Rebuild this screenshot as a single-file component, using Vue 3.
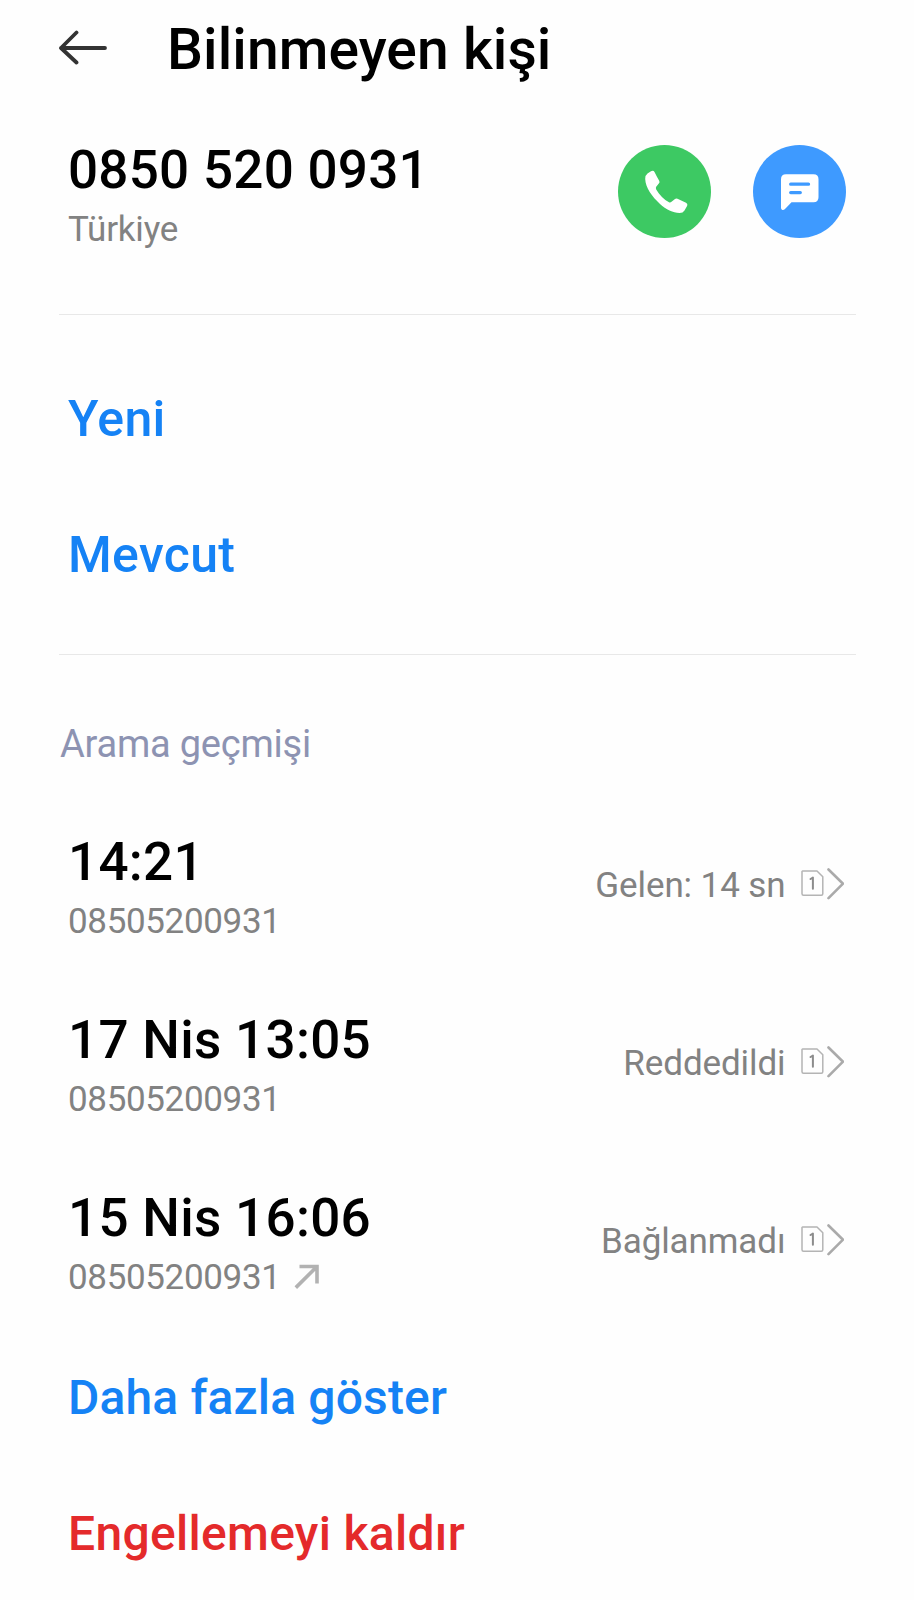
<script setup>
const calls = [
  { time: '14:21', number: '08505200931', status: 'Gelen: 14 sn', outgoing: false },
  { time: '17 Nis 13:05', number: '08505200931', status: 'Reddedildi', outgoing: false },
  { time: '15 Nis 16:06', number: '08505200931', status: 'Bağlanmadı', outgoing: true },
]
</script>

<template>
  <main class="page">
    <header class="header">
      <svg class="back" width="50" height="36" viewBox="0 0 50 36">
        <path d="M18.500 2.500 3 18l15.500 14.500M3 18h44" />
      </svg>
      <h1 class="title">Bilinmeyen kişi</h1>
    </header>

    <section class="contact">
      <div class="lines">
        <div class="primary phone">0850 520 0931</div>
        <div class="secondary region">Türkiye</div>
      </div>
      <div class="actions">
        <button class="round call">
          <svg width="93" height="93" viewBox="0 0 93 93">
            <path d="M29.500 28.500 33 26.200Q35.500 25 36.500 27L38.800 31.500 41.200 35.700Q42 37.200 41 38.300L38.200 41.800Q37.500 43 38.200 44.500C41.500 50 46 54.500 51 57.300Q52.500 57.800 53.500 56.800L57 54Q58 53.200 59.500 53.800L68 57.800Q70 59 69.200 60.800L66.500 65.500Q65 68 61.500 68C55 68 48 64.500 42 59C34 51.500 27.500 42.500 27.200 34Q27 30.300 29.500 28.500Z" />
          </svg>
        </button>
        <button class="round message">
          <svg width="93" height="93" viewBox="0 0 93 93">
            <path d="M33 29.200H60.500Q65.500 29.200 65.500 34.200V52.300Q65.500 57.300 60.500 57.300H38.500L32 64Q30.500 65.500 29 64.800Q28 64.300 28 62.800V34.200Q28 29.200 33 29.200Z" />
            <path class="bar" d="M37.700 39.200H55.500M37.700 47.600H47.300" />
          </svg>
        </button>
      </div>
    </section>

    <nav class="links">
      <a class="link">Yeni</a>
      <a class="link">Mevcut</a>
    </nav>

    <h2 class="caption">Arama geçmişi</h2>

    <ul class="history">
      <li v-for="call in calls" :key="call.time" class="row">
        <div class="lines">
          <div class="primary">{{ call.time }}</div>
          <div class="secondary number">
            <span>{{ call.number }}</span>
            <svg v-if="call.outgoing" class="out" width="28" height="28" viewBox="0 0 28 28">
              <path d="M6.500 4.500H24V21.500M23 5.500 2.800 25.600" />
            </svg>
          </div>
        </div>
        <div class="status">
          <span class="state">{{ call.status }}</span>
          <svg width="44" height="34" viewBox="0 0 44 34">
            <path class="sim" d="M2.500 4H17L22.800 9.800V26.800Q22.800 28.300 21.300 28.300H3.500Q2 28.300 2 26.800V4.500Z" />
            <path class="one" d="M10.500 12 12.900 10.600V21.800" />
            <path class="chevron" d="M28.500 2.500 43 16.700 28.500 31.200" />
          </svg>
        </div>
      </li>
    </ul>

    <footer class="footer">
      <a class="link more">Daha fazla göster</a>
      <a class="link danger">Engellemeyi kaldır</a>
    </footer>
  </main>
</template>

<style>
body {
  background: #fefefe;
}
</style>

<style scoped>
.page {
  width: 914px;
  height: 1600px;
  overflow: hidden;
  background: #fefefe;
  color: #000;
  font-family: Roboto, "Liberation Sans", sans-serif;
  display: flex;
  flex-direction: column;
  white-space: nowrap;
}
svg {
  display: block;
  flex: none;
  fill: none;
  stroke-linecap: round;
  stroke-linejoin: round;
}
.header {
  height: 100px;
  flex: none;
  display: flex;
  align-items: center;
  padding-left: 58px;
}
.back {
  margin-bottom: 4px;
  stroke: #333;
  stroke-width: 3.800px;
}
.title {
  margin: 0 0 0 59px;
  font-size: 57px;
  font-weight: 500;
  line-height: 68px;
  letter-spacing: 0.080px;
}
.contact {
  height: 215px;
  box-sizing: border-box;
  flex: none;
  margin: 0 58px 0 59px;
  padding: 39px 10px 0 9px;
  border-bottom: 1px solid #e8e8e8;
  display: flex;
  justify-content: space-between;
}
.primary {
  font-size: 53px;
  font-weight: 500;
  line-height: 62px;
  letter-spacing: 0.300px;
}
.phone {
  letter-spacing: 0.250px;
}
.secondary {
  margin-top: 6px;
  display: flex;
  align-items: center;
  font-size: 35px;
  line-height: 45px;
  letter-spacing: -0.200px;
  color: #828282;
}
.number {
  letter-spacing: -0.350px;
}
.actions {
  display: flex;
  gap: 42px;
  padding-top: 5.500px;
}
.round {
  width: 93px;
  height: 93px;
  padding: 0;
  border: 0;
  border-radius: 50%;
}
.round svg {
  fill: #fff;
}
.call {
  background: #3dc963;
}
.message {
  background: #3e9aff;
}
.round .bar {
  stroke: #3e9aff;
  stroke-width: 3.300px;
}
.links {
  height: 340px;
  box-sizing: border-box;
  flex: none;
  margin: 0 58px 0 59px;
  padding: 37px 0 0 9px;
  border-bottom: 1px solid #e8e8e8;
}
.link {
  display: block;
  font-size: 50px;
  font-weight: 500;
  line-height: 135.700px;
  letter-spacing: 0.350px;
  color: #1582f5;
}
.caption {
  flex: none;
  height: 140px;
  margin: 0;
  padding: 64px 0 0 60px;
  box-sizing: border-box;
  font-size: 38px;
  font-weight: 400;
  line-height: 50px;
  letter-spacing: -0.220px;
  color: #8d93b2;
}
.history {
  flex: none;
  list-style: none;
  margin: 0;
  padding: 0 70px 0 68px;
}
.row {
  height: 178px;
  display: flex;
  justify-content: space-between;
  align-items: center;
}
.row .lines {
  padding-top: 6px;
}
.out {
  margin-left: 12px;
  margin-bottom: 3px;
  stroke: #b2b2b2;
  stroke-width: 3.600px;
  stroke-linecap: butt;
  stroke-linejoin: miter;
}
.status {
  display: flex;
  align-items: center;
  font-size: 35px;
  letter-spacing: -0.100px;
  color: #828282;
}
.state {
  margin-right: 14.500px;
  padding-top: 2px;
}
.sim {
  stroke: #b4b4b4;
  stroke-width: 1.500px;
}
.one {
  stroke: #8c8c8c;
  stroke-width: 2px;
}
.chevron {
  stroke: #aaa;
  stroke-width: 2.600px;
}
.footer {
  padding: 1px 0 0 68px;
}
.footer .link {
  font-size: 48px;
  letter-spacing: 0.150px;
}
.footer .danger {
  letter-spacing: 0.300px;
  color: #e42a2b;
}
</style>
